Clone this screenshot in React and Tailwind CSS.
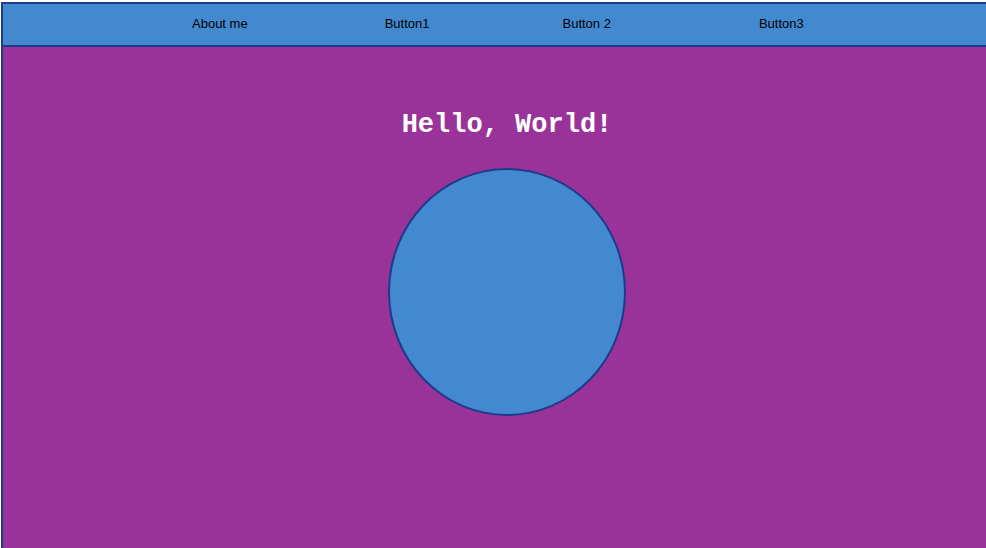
const NavItem = ({ label, className }) => (
  <span className={`text-[13px] text-black ${className}`}>{label}</span>
);

export default function App() {
  return (
    <div className="w-[986px] h-[548px] overflow-hidden bg-white">
      <div
        className="ml-px mt-[2px] w-[1010px] h-[600px] border-l-2 border-t-2 border-[#1e3a8a] bg-[#993399]"
        style={{ fontFamily: '"Liberation Sans", Arial, sans-serif' }}
      >
        <nav className="flex items-center h-[43px] pb-[2px] bg-[#4389cf] border-b-2 border-[#1e3a8a]">
          <NavItem label="About me" className="ml-[189px]" />
          <NavItem label="Button1" className="ml-[137px]" />
          <NavItem label="Button 2" className="ml-[133px]" />
          <NavItem label="Button3" className="ml-[148px]" />
        </nav>
        <div className="flex flex-col items-center">
          <h1
            className="mt-[62px] h-[32px] leading-[32px] text-[27px] font-bold text-white"
            style={{ fontFamily: '"Courier New", Courier, "Liberation Mono", monospace' }}
          >
            Hello, World!
          </h1>
          <div className="mt-[27px] w-[238px] h-[248px] rounded-[50%] bg-[#4389cf] border-2 border-[#1e3a8a]" />
        </div>
      </div>
    </div>
  );
}
